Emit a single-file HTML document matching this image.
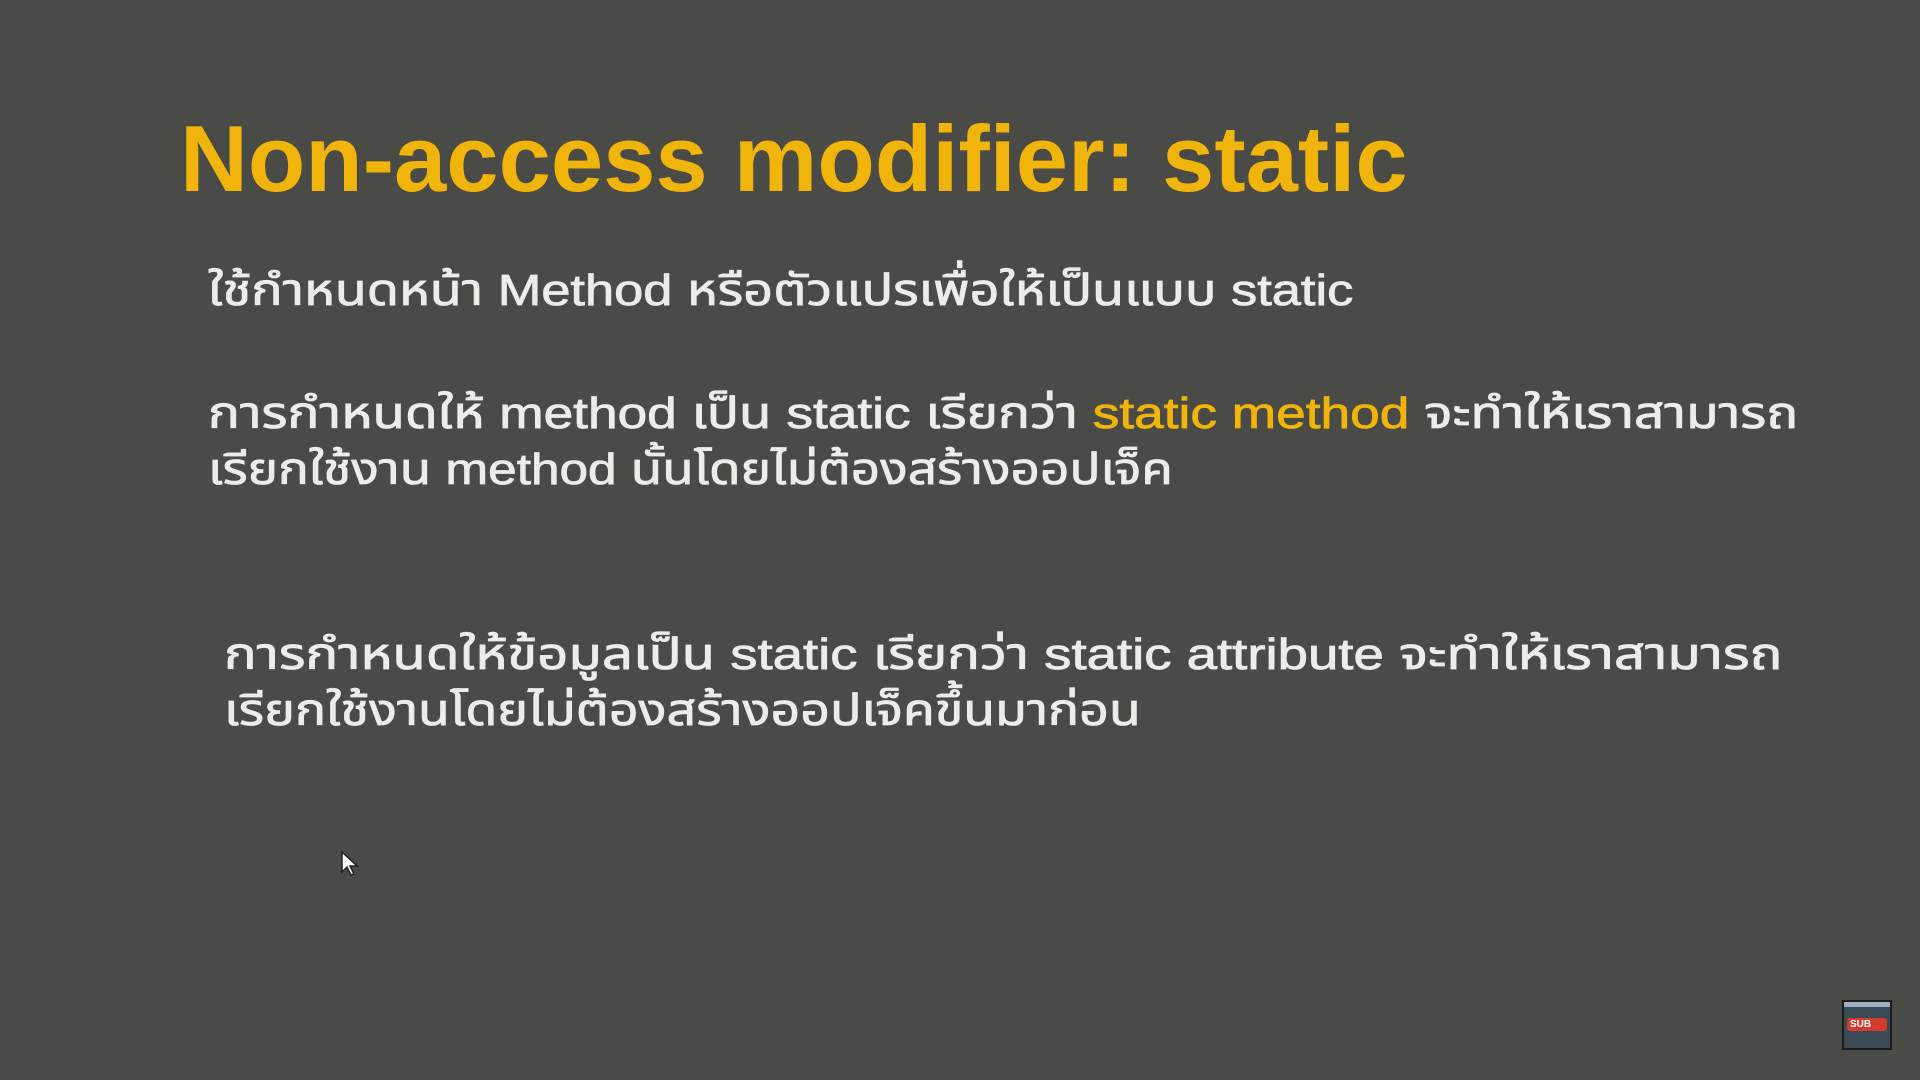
<!DOCTYPE html>
<html><head><meta charset="utf-8"><style>
html,body{margin:0;padding:0;}
body{width:1920px;height:1080px;background:#4a4a46;position:relative;overflow:hidden;font-family:"Liberation Sans","Noto Sans Thai","Loma","Garuda","Tlwg Typist",sans-serif;}
.t{position:absolute;white-space:nowrap;color:#ececec;font-size:44px;line-height:1;transform-origin:0 50%;-webkit-text-stroke:0.8px currentColor;}
.y{color:#f0b40a;}
#title{position:absolute;left:180px;top:112px;font-size:94px;font-weight:bold;color:#f0b40a;white-space:nowrap;line-height:1;}
</style></head><body>
<div id="title">Non-access modifier: static</div>
<div class="t" style="left:208px;top:269px;transform:scaleX(1.19)">ใช้กำหนดหน้า Method หรือตัวแปรเพื่อให้เป็นแบบ static</div>
<div class="t" style="left:208px;top:392px;transform:scaleX(1.21)">การกำหนดให้ method เป็น static เรียกว่า <span class="y">static method</span> จะทำให้เราสามารถ</div>
<div class="t" style="left:208px;top:448px;transform:scaleX(1.166)">เรียกใช้งาน method นั้นโดยไม่ต้องสร้างออปเจ็ค</div>
<div class="t" style="left:224px;top:633px;transform:scaleX(1.24)">การกำหนดให้ข้อมูลเป็น static เรียกว่า static attribute จะทำให้เราสามารถ</div>
<div class="t" style="left:224px;top:689px;transform:scaleX(1.18)">เรียกใช้งานโดยไม่ต้องสร้างออปเจ็คขึ้นมาก่อน</div>
<svg style="position:absolute;left:340px;top:850px" width="20" height="28" viewBox="0 0 20 28"><path d="M2 2 L2 22 L7 17 L11 25 L14 24 L10 16 L17 16 Z" fill="#fff" stroke="#222" stroke-width="1.5"/></svg>
<div style="position:absolute;left:1842px;top:1000px;width:50px;height:50px;background:#1c1c1c;">
 <div style="position:absolute;left:2px;top:2px;width:46px;height:46px;background:#3c4a55;"></div>
 <div style="position:absolute;left:2px;top:2px;width:46px;height:5px;background:#9fb0bf;"></div>
 <div style="position:absolute;left:5px;top:18px;width:40px;height:13px;background:#d23c2c;border-radius:3px;color:#fff;font:bold 10px 'Liberation Sans',sans-serif;line-height:13px;padding-left:3px;box-sizing:border-box;">SUB</div>
</div>
</body></html>
